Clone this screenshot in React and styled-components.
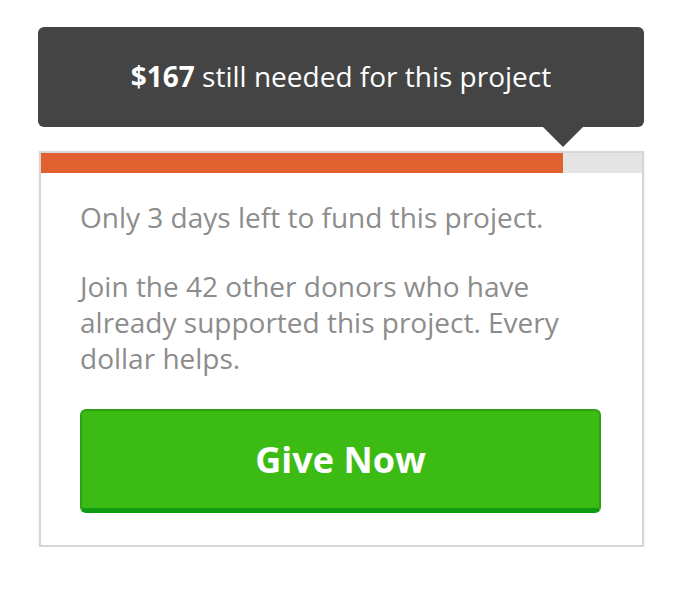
import React from "react";
import styled, { createGlobalStyle } from "styled-components";

const GlobalStyle = createGlobalStyle`
  body {
    margin: 0;
    background: #fff;
    font-family: "Open Sans", "Noto Sans", sans-serif;
  }
`;

const Page = styled.div`
  padding: 27px 32px 0 38px;
  width: 606px;
`;

const Tooltip = styled.div`
  position: relative;
  background: #444444;
  border-radius: 6px;
  height: 100px;
  display: flex;
  align-items: center;
  justify-content: center;
  color: #fff;
  font-size: 28px;
  margin-bottom: 24px;
  padding-bottom: 2px;
  box-sizing: border-box;

  &::after {
    content: "";
    position: absolute;
    top: 100%;
    left: ${(p) => p.arrowAt}px;
    margin-left: -20px;
    border-left: 20px solid transparent;
    border-right: 20px solid transparent;
    border-top: 20px solid #444444;
  }

  b {
    font-weight: 700;
  }
`;

const Card = styled.div`
  margin-left: 1px;
  border: 2px solid #d6d6d6;
  box-shadow: 0 1px 2px rgba(0, 0, 0, 0.12);
  background: #fff;
`;

const Track = styled.div`
  height: 20px;
  background: #e4e4e4;
`;

const Fill = styled.div`
  height: 100%;
  background: #e06030;
`;

const Body = styled.div`
  padding: 26px 41px 32px 39px;
`;

const Text = styled.p`
  margin: 0 0 ${(p) => p.gap || 0}px;
  color: #8c8c8c;
  font-size: 28px;
  line-height: 36px;
`;

const GiveButton = styled.button`
  display: block;
  width: 100%;
  height: 104px;
  margin-top: 33px;
  border: 2px solid #2fa214;
  border-bottom: 5px solid #0d9c12;
  border-radius: 6px;
  background: #3cbb15;
  color: #fff;
  font-family: "Open Sans", "Noto Sans", sans-serif;
  font-weight: 700;
  font-size: 36px;
  cursor: pointer;
`;

const App = () => {
  const pct = 86.9;
  return (
    <>
      <GlobalStyle />
      <Page>
        <Tooltip arrowAt={525}>
          <span>
            <b>$167</b> still needed for this project
          </span>
        </Tooltip>
        <Card>
          <Track>
            <Fill style={{ width: pct + "%" }} />
          </Track>
          <Body>
            <Text gap={33}>Only 3 days left to fund this project.</Text>
            <Text>
              Join the 42 other donors who have already supported this
              project. Every dollar helps.
            </Text>
            <GiveButton>Give Now</GiveButton>
          </Body>
        </Card>
      </Page>
    </>
  );
};

export default App;
